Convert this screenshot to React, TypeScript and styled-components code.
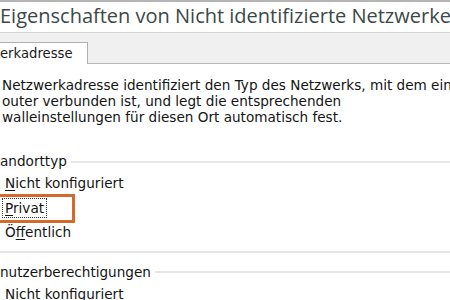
import React from "react";
import styled, { createGlobalStyle } from "styled-components";

const Global = createGlobalStyle`
  html, body { margin: 0; padding: 0; background: #ffffff; }
  body { width: 450px; height: 300px; overflow: hidden; }
`;

const Window = styled.div`
  width: 450px;
  height: 300px;
  overflow: hidden;
  display: flex;
  flex-direction: column;
  border-top: 2px solid #b4b4b4;
  box-sizing: border-box;
  background: #fff;
`;

const TitleBar = styled.div`
  height: 31px;
  flex: none;
  display: flex;
  align-items: center;
  font-family: "Open Sans", "Noto Sans", sans-serif;
  font-size: 20px;
  color: #3b4848;
  white-space: nowrap;
  overflow: hidden;
  border-bottom: 1px solid #d6d6d6;
  line-height: 1;
  padding-bottom: 2px;
  box-sizing: border-box;
`;

const TabStrip = styled.div`
  height: 31px;
  flex: none;
  background: #f0f0f0;
  display: flex;
  align-items: flex-end;
  border-bottom: 1px solid #b9b9b9;
  box-sizing: border-box;
`;

const Tab = styled.div`
  width: 88px;
  height: 22px;
  margin-bottom: -1px;
  background: #fff;
  border: 1px solid #b0b0b0;
  border-left: none;
  border-bottom: none;
  box-sizing: border-box;
  font-family: "DejaVu Sans", sans-serif;
  font-size: 13.2px;
  color: #1a1a1a;
  display: flex;
  align-items: center;
  white-space: nowrap;
  overflow: hidden;
`;

const Content = styled.div`
  flex: 1;
  display: flex;
  flex-direction: column;
  font-family: "DejaVu Sans", sans-serif;
  font-size: 13.6px;
  color: #141414;
  overflow: hidden;
`;

const Description = styled.div`
  padding: 13px 0 0 2px;
  line-height: 16px;
  white-space: nowrap;
`;

const Group = styled.div<{ $top: number }>`
  margin-top: ${(p) => p.$top}px;
  display: flex;
  flex-direction: column;
`;

const GroupHeader = styled.div`
  display: flex;
  align-items: center;
  height: 16px;
  white-space: nowrap;
`;

const GroupLine = styled.div`
  flex: 1;
  height: 0;
  border-top: 2px solid #e6e6e6;
  margin-left: 4px;
  margin-top: 1px;
`;

const Options = styled.div`
  display: flex;
  flex-direction: column;
  padding-top: 2px;
`;

const Option = styled.div<{ $highlight?: boolean }>`
  position: relative;
  height: 24.5px;
  display: flex;
  align-items: center;
  padding-left: 5px;
  white-space: nowrap;
  box-sizing: border-box;

  ${(p) =>
    p.$highlight &&
    `
    &::after {
      content: "";
      position: absolute;
      left: -3px;
      top: -2px;
      width: 78px;
      bottom: -3px;
      border: 3px solid #d4692c;
      box-sizing: border-box;
    }
  `}
`;

const Focus = styled.span`
  outline: 1px dotted #333;
  outline-offset: 1px;
  margin-left: -1px;
  padding: 0 1px;
`;

const U = styled.span`
  text-decoration: underline;
  text-underline-offset: 2px;
`;

const Separator = styled.div`
  border-top: 2px solid #e6e6e6;
  margin-top: 6px;
`;

export default function App() {
  return (
    <>
      <Global />
      <Window>
        <TitleBar>Eigenschaften von Nicht identifizierte Netzwerke</TitleBar>
        <TabStrip>
          <Tab>erkadresse</Tab>
        </TabStrip>
        <Content>
          <Description>
            <div>Netzwerkadresse identifiziert den Typ des Netzwerks, mit dem ein</div>
            <div>outer verbunden ist, und legt die entsprechenden</div>
            <div>walleinstellungen für diesen Ort automatisch fest.</div>
          </Description>
          <Group $top={28}>
            <GroupHeader>
              andorttyp
              <GroupLine />
            </GroupHeader>
            <Options>
              <Option>
                <span>
                  <U>N</U>icht konfiguriert
                </span>
              </Option>
              <Option $highlight>
                <Focus>
                  <U>P</U>rivat
                </Focus>
              </Option>
              <Option>
                <span>
                  Ö<U>f</U>fentlich
                </span>
              </Option>
            </Options>
          </Group>
          <Separator />
          <Group $top={11}>
            <GroupHeader>
              nutzerberechtigungen
              <GroupLine />
            </GroupHeader>
            <Options>
              <Option>
                <span>
                  Nic<U>h</U>t konfiguriert
                </span>
              </Option>
            </Options>
          </Group>
        </Content>
      </Window>
    </>
  );
}
